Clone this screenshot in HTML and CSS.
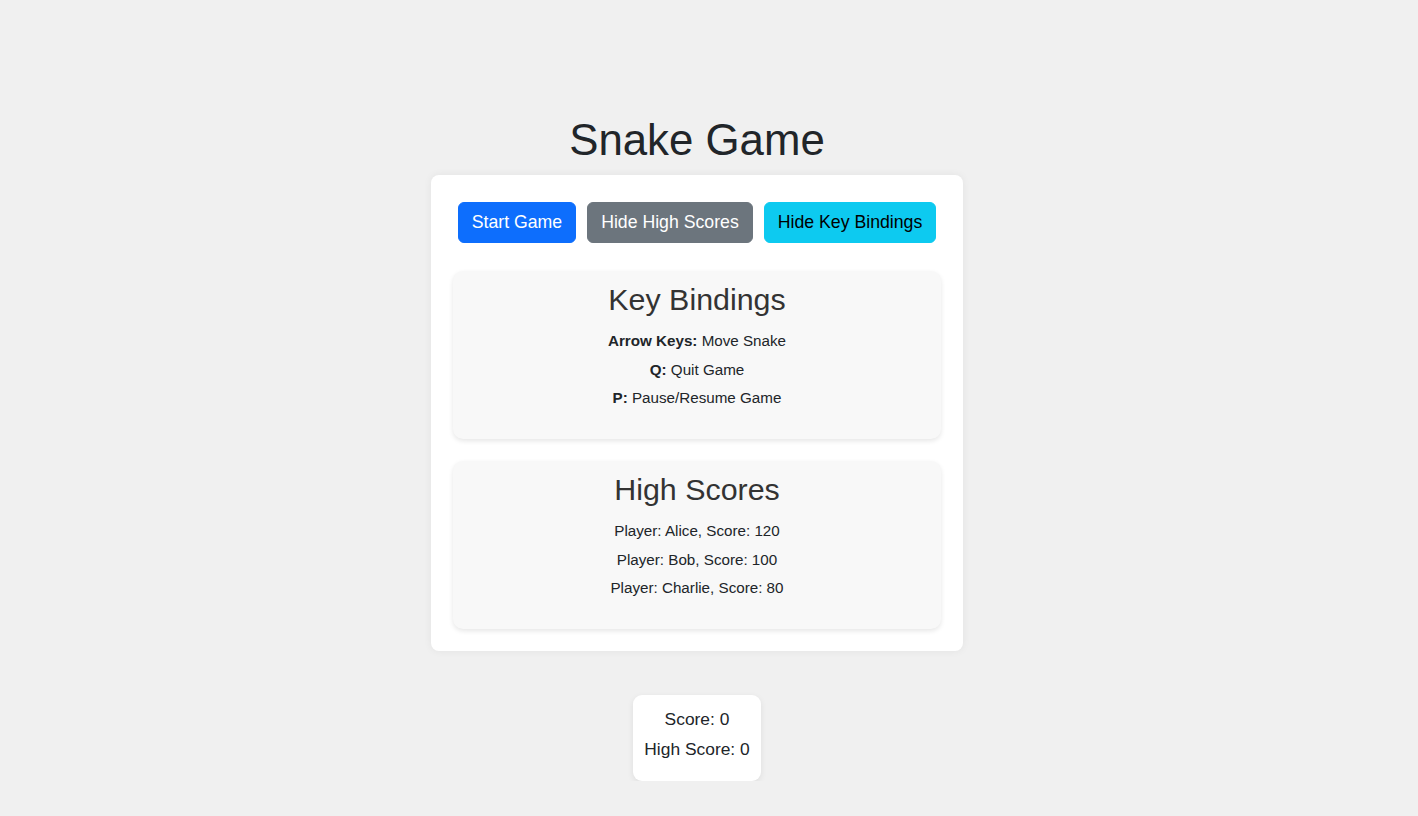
FILE: index.html
```html
<!DOCTYPE html>
<html lang="en">
<head>
<meta charset="utf-8">
<title>Snake Game</title>
<link rel="stylesheet" href="styles.css">
</head>
<body>
<main class="page">
  <h1 class="title">Snake Game</h1>
  <section class="card">
    <div class="controls">
      <button class="btn btn-primary">Start Game</button>
      <button class="btn btn-secondary">Hide High Scores</button>
      <button class="btn btn-info">Hide Key Bindings</button>
    </div>
    <div class="panel">
      <h3 class="panel-title">Key Bindings</h3>
      <p class="line"><strong>Arrow Keys:</strong> Move Snake</p>
      <p class="line"><strong>Q:</strong> Quit Game</p>
      <p class="line"><strong>P:</strong> Pause/Resume Game</p>
    </div>
    <div class="panel">
      <h3 class="panel-title">High Scores</h3>
      <p class="line">Player: Alice, Score: 120</p>
      <p class="line">Player: Bob, Score: 100</p>
      <p class="line">Player: Charlie, Score: 80</p>
    </div>
  </section>
  <section class="scorebox">
    <p class="score">Score: 0</p>
    <p class="score">High Score: 0</p>
  </section>
</main>
</body>
</html>
```
FILE: styles.css
```css
* { box-sizing: border-box; }
html, body { margin: 0; padding: 0; }
body {
  background: #f0f0f0;
  font-family: "Liberation Sans", Arial, sans-serif;
  color: #212529;
}
.page {
  display: flex;
  flex-direction: column;
  align-items: center;
  padding: 114px 24px 0 0;
}
.title {
  margin: 0 0 8px;
  font-size: 43.8px;
  font-weight: 400;
  line-height: 1.2;
  color: #212529;
}
.card {
  width: 532px;
  background: #fff;
  border-radius: 8px;
  box-shadow: 0 0 8px rgba(0,0,0,0.06);
  padding: 22px;
  display: flex;
  flex-direction: column;
  gap: 22px;
}
.controls {
  display: flex;
  justify-content: center;
  gap: 11px;
  padding: 5px 0 6px;
}
.btn {
  font-family: "Liberation Sans", Arial, sans-serif;
  font-size: 17.7px;
  line-height: 25px;
  padding: 7px 13px;
  border: 1px solid transparent;
  border-radius: 6px;
  cursor: pointer;
}
.btn-primary { background: #0d6efd; border-color: #0d6efd; color: #fff; }
.btn-secondary { background: #6c757d; border-color: #6c757d; color: #fff; }
.btn-info { background: #0dcaf0; border-color: #0dcaf0; color: #000; }
.panel {
  background: #f8f8f8;
  border-radius: 10px;
  box-shadow: 0 2px 5px rgba(0,0,0,0.1);
  padding: 10px 10px 23px;
  text-align: center;
  height: 168px;
}
.panel-title {
  margin: 0 0 13px;
  font-size: 30.4px;
  font-weight: 400;
  line-height: 1.2;
  color: #333;
}
.line {
  margin: 0 0 5.7px;
  font-size: 15.2px;
  line-height: 22.8px;
  color: #212529;
}
.scorebox {
  margin-top: 44px;
  width: 128px;
  background: #fff;
  border-radius: 9px;
  box-shadow: 0 2px 6px rgba(0,0,0,0.08);
  padding: 11px 8px 14px;
  text-align: center;
}
.score {
  margin: 0 0 4.5px;
  font-size: 17.4px;
  line-height: 26.4px;
  color: #212529;
}
```
